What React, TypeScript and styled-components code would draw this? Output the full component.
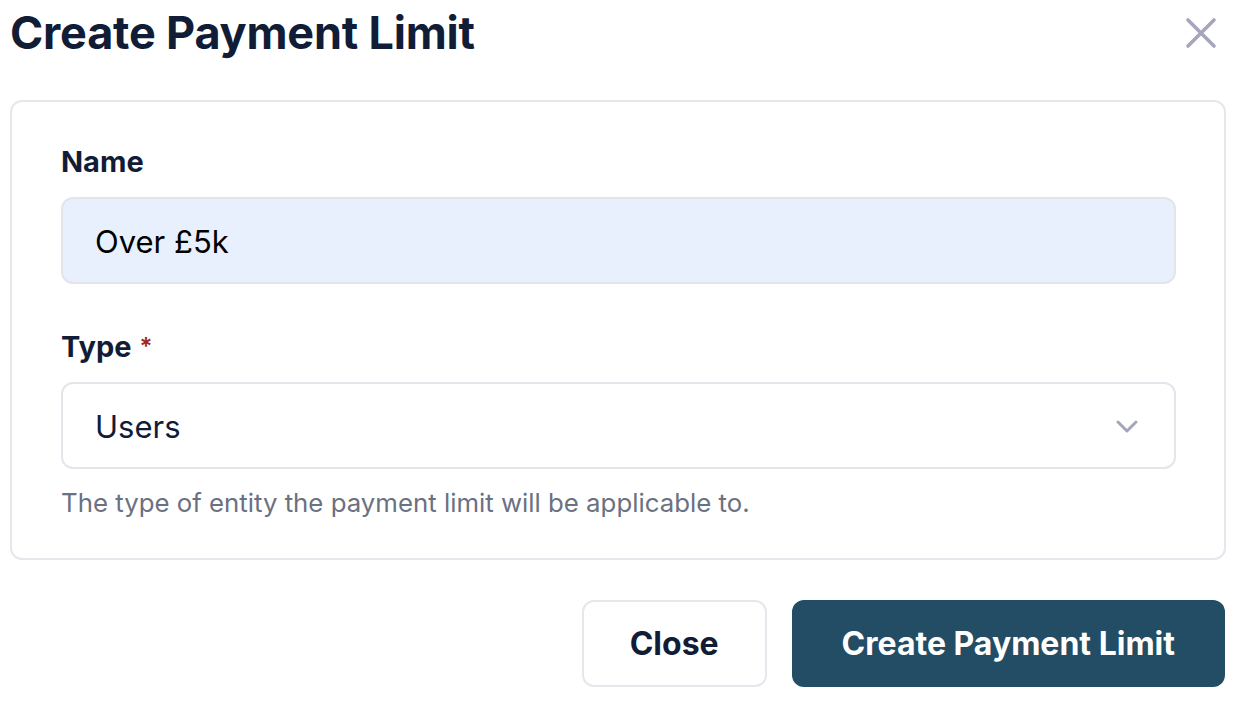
import React from "react";
import styled, { createGlobalStyle } from "styled-components";

const GlobalStyle = createGlobalStyle`
  html, body {
    margin: 0;
    padding: 0;
    background: #ffffff;
  }
  body {
    font-family: Inter, "Noto Sans", sans-serif;
    -webkit-font-smoothing: antialiased;
  }
  * {
    box-sizing: border-box;
  }
`;

const Modal = styled.div`
  width: 1249px;
  padding: 6px 23px 0 10px;
  display: flex;
  flex-direction: column;
`;

const Header = styled.div`
  display: flex;
  justify-content: space-between;
  align-items: center;
  height: 54px;
`;

const Title = styled.h1`
  margin: 0;
  font-size: 45px;
  font-weight: 700;
  color: #111c36;
  letter-spacing: -0.2px;
  line-height: 54px;
`;

const CloseIcon = styled.button`
  border: none;
  background: none;
  padding: 0;
  width: 32px;
  height: 32px;
  display: flex;
  align-items: center;
  justify-content: center;
  cursor: pointer;
  margin-right: 9px;
`;

const Card = styled.div`
  margin-top: 40px;
  border: 2px solid #e6e6ec;
  border-radius: 12px;
  padding: 40px 48px 37px 49px;
  display: flex;
  flex-direction: column;
`;

const Field = styled.div<{ $top?: number }>`
  display: flex;
  flex-direction: column;
  margin-top: ${(p) => p.$top ?? 0}px;
`;

const Label = styled.label`
  font-size: 29px;
  line-height: 40px;
  font-weight: 700;
  color: #111c36;
`;

const Required = styled.span`
  color: #a3281f;
  margin-left: 8px;
  font-size: 24px;
  font-weight: 600;
  vertical-align: top;
`;

const Input = styled.div<{ $filled?: boolean }>`
  margin-top: 15px;
  height: 87px;
  border: 2px solid #e3e5ea;
  border-radius: 12px;
  background: ${(p) => (p.$filled ? "#e8f0fe" : "#ffffff")};
  display: flex;
  align-items: center;
  justify-content: space-between;
  padding: 2px 36px 0 32px;
  font-size: 31px;
  color: ${(p) => (p.$filled ? "#000000" : "#111c36")};
`;

const Help = styled.div`
  margin-top: 16px;
  font-size: 25.8px;
  line-height: 36px;
  color: #6b7181;
`;

const Actions = styled.div`
  display: flex;
  justify-content: flex-end;
  gap: 25px;
  margin-top: 40px;
  margin-right: 1px;
`;

const Button = styled.button<{ $primary?: boolean }>`
  height: 87px;
  border-radius: 12px;
  font-family: Inter, "Noto Sans", sans-serif;
  font-size: 32px;
  font-weight: 700;
  cursor: pointer;
  padding: 0 ${(p) => (p.$primary ? 50 : 46)}px;
  border: ${(p) => (p.$primary ? "none" : "2px solid #e6e6ec")};
  background: ${(p) => (p.$primary ? "#224d64" : "#ffffff")};
  color: ${(p) => (p.$primary ? "#ffffff" : "#111c36")};
`;

const App = () => (
  <>
    <GlobalStyle />
    <Modal>
      <Header>
        <Title>Create Payment Limit</Title>
        <CloseIcon aria-label="Close">
          <svg width="32" height="32" viewBox="0 0 32 32">
            <path
              d="M3 3 L29 29 M29 3 L3 29"
              stroke="#a6a6ba"
              strokeWidth="3.6"
              strokeLinecap="round"
            />
          </svg>
        </CloseIcon>
      </Header>
      <Card>
        <Field>
          <Label>Name</Label>
          <Input $filled>Over £5k</Input>
        </Field>
        <Field $top={43}>
          <Label>
            Type<Required>*</Required>
          </Label>
          <Input>
            Users
            <svg width="22" height="14" viewBox="0 0 22 14">
              <path
                d="M2 2 L11 11 L20 2"
                stroke="#a6a6ba"
                strokeWidth="3"
                fill="none"
                strokeLinecap="round"
                strokeLinejoin="round"
              />
            </svg>
          </Input>
          <Help>The type of entity the payment limit will be applicable to.</Help>
        </Field>
      </Card>
      <Actions>
        <Button>Close</Button>
        <Button $primary>Create Payment Limit</Button>
      </Actions>
    </Modal>
  </>
);

export default App;
